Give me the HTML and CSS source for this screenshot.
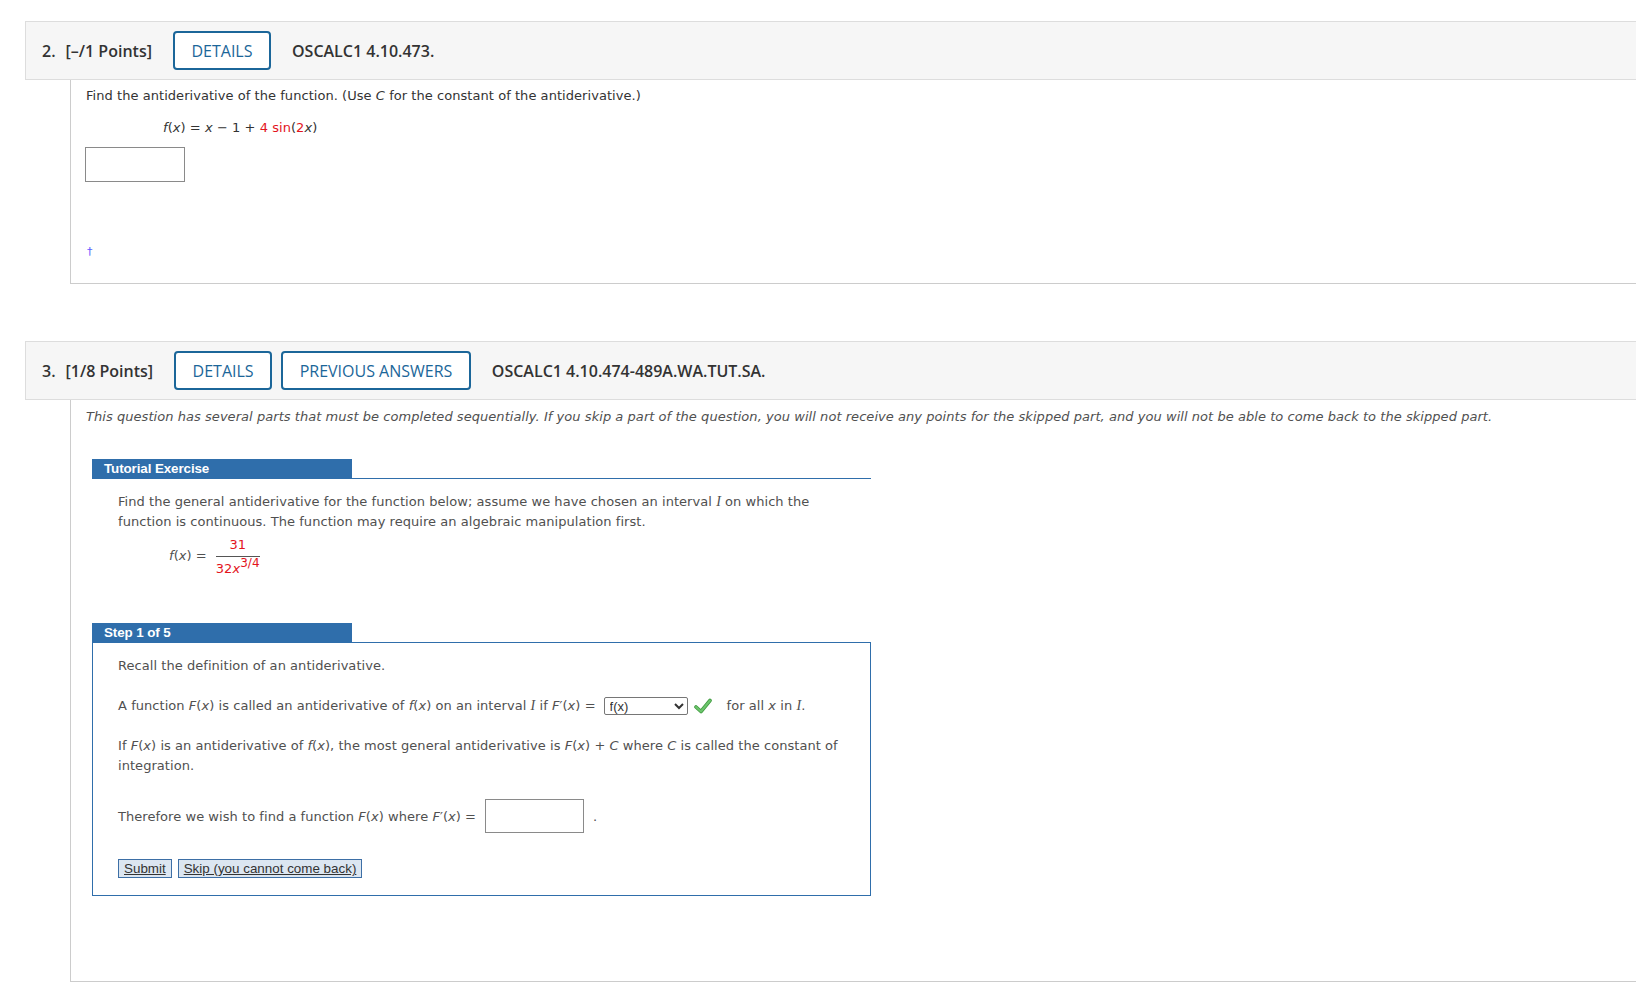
FILE: index.html
```html
<!DOCTYPE html>
<html lang="en">
<head>
    <meta charset="UTF-8">
    <meta name="viewport" content="width=device-width, initial-scale=1.0">
    <title>Assignment</title>
    <link rel="stylesheet" href="styles.css">
</head>
<body>
    <div class="question q-first">
        <div class="q-head">
            <span class="q-num">2.</span>
            <span class="q-points">[&ndash;/1 Points]</span>
            <button class="q-btn">DETAILS</button>
            <span class="q-code">OSCALC1 4.10.473.</span>
        </div>
        <div class="q-body">
            <p class="line dark">Find the antiderivative of the function. (Use <i>C</i> for the constant of the antiderivative.)</p>
            <p class="line dark formula"><i>f</i>(<i>x</i>) = <i>x</i> &minus; 1 + <span class="red">4</span> <span class="red">sin</span>(<span class="red">2</span><i>x</i>)</p>
            <input type="text" class="answer answer-first">
            <div class="dagger">&dagger;</div>
        </div>
    </div>

    <div class="question q-second">
        <div class="q-head">
            <span class="q-num">3.</span>
            <span class="q-points">[1/8 Points]</span>
            <button class="q-btn">DETAILS</button>
            <button class="q-btn">PREVIOUS ANSWERS</button>
            <span class="q-code">OSCALC1 4.10.474-489A.WA.TUT.SA.</span>
        </div>
        <div class="q-body q-body-tall">
            <p class="line intro"><i>This question has several parts that must be completed sequentially. If you skip a part of the question, you will not receive any points for the skipped part, and you will not be able to come back to the skipped part.</i></p>

            <div class="tut">
                <div class="tut-head"><span class="tut-bar">Tutorial Exercise</span></div>
                <p class="tut-text">Find the general antiderivative for the function below; assume we have chosen an interval <i class="math-i">I</i> on which the function is continuous. The function may require an algebraic manipulation first.</p>
                <div class="frac-row">
                    <span class="frac-lhs"><i>f</i>(<i>x</i>) =</span>
                    <span class="frac">
                        <span class="frac-num red">31</span>
                        <span class="frac-den red">32<i>x</i><sup>3/4</sup></span>
                    </span>
                </div>

                <div class="step-head"><span class="tut-bar">Step 1 of 5</span></div>
                <div class="step-box">
                    <p class="step-line">Recall the definition of an antiderivative.</p>
                    <div class="step-line step-gap select-line">
                        <span>A function <i>F</i>(<i>x</i>) is called an antiderivative of <i>f</i>(<i>x</i>) on an interval <i class="math-i">I</i> if <i>F</i>&prime;(<i>x</i>) =</span>
                        <select class="pick">
                            <option>f(x)</option>
                        </select>
                        <svg class="check" width="18" height="16" viewBox="0 0 18 16">
                            <path d="M2 9 L7 13.5 L16 2.5" fill="none" stroke="#3f9a3f" stroke-width="3.6" stroke-linecap="round" stroke-linejoin="round"/>
                            <path d="M2 9 L7 13.5 L16 2.5" fill="none" stroke="#6cc46c" stroke-width="2" stroke-linecap="round" stroke-linejoin="round"/>
                        </svg>
                        <span class="after-check">for all <i>x</i> in <i class="math-i">I</i>.</span>
                    </div>
                    <p class="step-line step-gap">If <i>F</i>(<i>x</i>) is an antiderivative of <i>f</i>(<i>x</i>), the most general antiderivative is <i>F</i>(<i>x</i>) + <i>C</i> where <i>C</i> is called the constant of integration.</p>
                    <div class="wish-row">
                        <span>Therefore we wish to find a function <i>F</i>(<i>x</i>) where <i>F</i>&prime;(<i>x</i>) =</span>
                        <input type="text" class="answer answer-step">
                        <span class="dot">.</span>
                    </div>
                    <div class="step-actions">
                        <button class="step-btn">Submit</button>
                        <button class="step-btn">Skip (you cannot come back)</button>
                    </div>
                </div>
            </div>
        </div>
    </div>
</body>
</html>
```

FILE: styles.css
```css
:root {
    --head-bg: #f6f6f6;
    --head-border: #dddddd;
    --body-border: #cccccc;
    --btn-color: #1b6699;
    --tut-blue: #2f6eab;
    --red: #e3141c;
}

body {
    margin: 0;
    padding: 21px 0 0 25px;
    font-family: "DejaVu Sans", Verdana, sans-serif;
    font-size: 13px;
    letter-spacing: 0.05px;
    color: #505050;
    background: #fff;
}

p {
    margin: 0;
}

.question {
    margin-bottom: 57px;
}

.q-head {
    box-sizing: border-box;
    height: 59px;
    display: flex;
    align-items: center;
    padding-left: 16px;
    background: var(--head-bg);
    border: 1px solid var(--head-border);
    border-right: none;
    font-family: "Open Sans", sans-serif;
    font-size: 16px;
    font-weight: 600;
    letter-spacing: 0;
    color: #333;
}

.q-num {
    margin-right: 10px;
}

.q-points {
    margin-right: 21px;
}

.q-btn {
    box-sizing: border-box;
    height: 39px;
    padding: 0 16.5px;
    margin-right: 9px;
    background: #fff;
    border: 2px solid var(--btn-color);
    border-radius: 4px;
    font-family: "Open Sans", sans-serif;
    font-size: 16px;
    font-weight: 400;
    color: var(--btn-color);
}

.q-code {
    margin-left: 12px;
}

.q-body {
    margin-left: 45px;
    padding: 6px 0 24px 15px;
    border-left: 1px solid var(--body-border);
    border-bottom: 1px solid var(--body-border);
}

.line {
    line-height: 20px;
}

.dark {
    color: #333;
}

.formula {
    margin-top: 12px;
    padding-left: 77px;
}

.red {
    color: var(--red);
}

.math-i {
    font-family: "Liberation Serif", serif;
    font-size: 14px;
}

.answer {
    box-sizing: border-box;
    display: block;
    border: 1px solid #8a8a8a;
    border-radius: 0;
    background: #fff;
    margin: 0;
}

.answer-first {
    width: 100px;
    height: 35px;
    margin: 9px 0 0 -1px;
}

.dagger {
    margin-top: 63px;
    line-height: 14px;
    font-size: 11px;
    color: #5b5bff;
    padding-left: 1px;
}

.q-body-tall {
    padding-top: 7px;
    padding-bottom: 85px;
}

.intro {
    color: #505050;
}

.tut {
    width: 779px;
    margin: 32px 0 0 6px;
}

.tut-head,
.step-head {
    height: 19px;
    border-bottom: 1px solid var(--tut-blue);
}

.tut-bar {
    display: block;
    box-sizing: border-box;
    width: 260px;
    height: 19px;
    padding-left: 12px;
    background: var(--tut-blue);
    color: #fff;
    font-family: "Liberation Sans", Arial, sans-serif;
    font-size: 13.4px;
    font-weight: bold;
    line-height: 19px;
    letter-spacing: -0.1px;
}

.tut-text {
    margin-top: 13px;
    padding: 0 26px;
    line-height: 20px;
}

.frac-row {
    display: flex;
    align-items: center;
    height: 44px;
    margin-top: 3px;
    padding-left: 77px;
}

.frac-lhs {
    margin-right: 7px;
    position: relative;
    top: -2px;
}

.frac {
    display: inline-flex;
    flex-direction: column;
    align-items: center;
    padding: 0 2px;
}

.frac-num {
    line-height: 18px;
    padding-bottom: 2px;
    border-bottom: 1px solid #555;
    align-self: stretch;
    text-align: center;
}

.frac-den {
    line-height: 18px;
    padding-top: 3px;
}

.frac-den sup {
    font-size: 12px;
    vertical-align: 6px;
    line-height: 0;
}

.step-head {
    margin-top: 44px;
    border-bottom: none;
}

.step-box {
    padding: 13px 25px 17px 25px;
    border: 1px solid var(--tut-blue);
}

.step-line {
    line-height: 20px;
}

.step-gap {
    margin-top: 20px;
}

.select-line {
    display: flex;
    align-items: center;
    height: 20px;
}

.pick {
    width: 84px;
    height: 18px;
    padding: 0 1px;
    margin: 0 0 0 8px;
    font-family: "Liberation Sans", Arial, sans-serif;
    font-size: 13px;
    color: #333;
    background: #fff;
    border: 1px solid #767676;
    border-radius: 2px;
}

.check {
    margin-left: 6px;
}

.after-check {
    margin-left: 15px;
}

.wish-row {
    display: flex;
    align-items: center;
    height: 34px;
    margin-top: 23px;
}

.answer-step {
    width: 99px;
    height: 34px;
    margin-left: 9px;
}

.dot {
    margin-left: 9px;
}

.step-actions {
    display: flex;
    gap: 6px;
    margin-top: 26px;
}

.step-btn {
    height: 19px;
    padding: 0 5px;
    background: #dce6f1;
    border: 1px solid #3d6fa6;
    border-radius: 0;
    font-family: "Liberation Sans", Arial, sans-serif;
    font-size: 13.4px;
    letter-spacing: 0;
    color: #333;
    text-decoration: underline;
    line-height: 17px;
}
```
